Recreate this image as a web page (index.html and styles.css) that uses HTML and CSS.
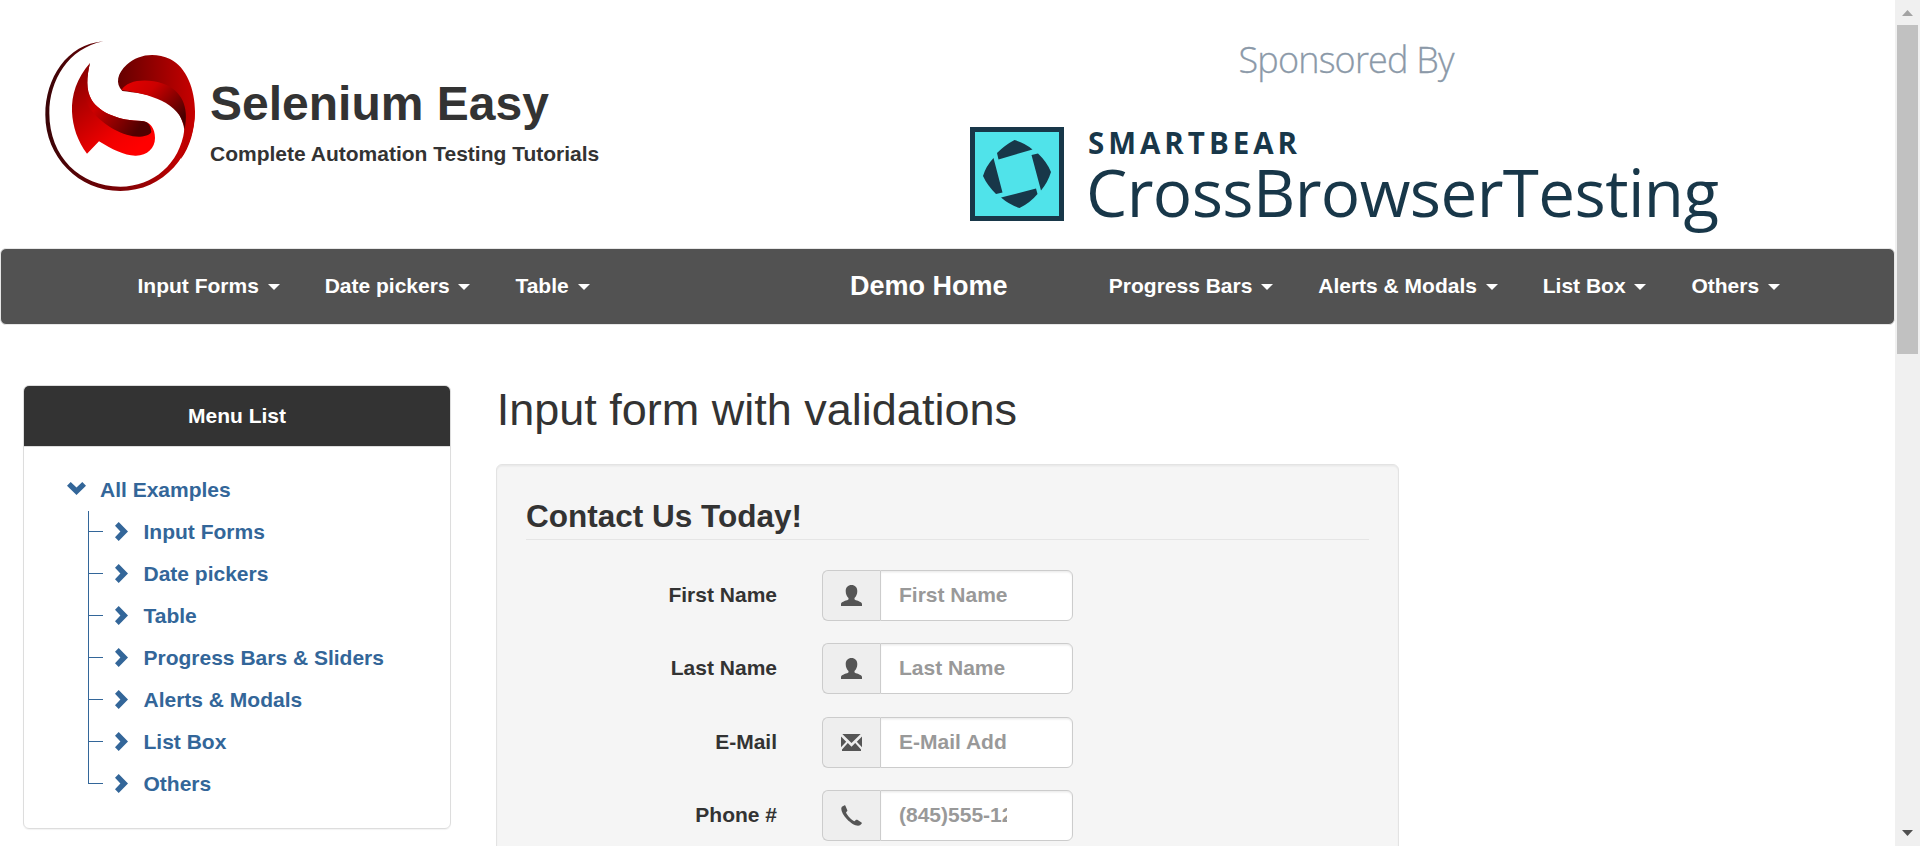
FILE: index.html
```html
<!DOCTYPE html>
<html lang="en">
<head>
<meta charset="utf-8">
<title>Selenium Easy - Input form with validations</title>
<link rel="stylesheet" href="styles.css">
</head>
<body>
<svg class="defs" width="0" height="0" aria-hidden="true">
  <symbol id="user" viewBox="0 0 21 21"><path d="M10.500 0C14 0 16.300 2.400 16.300 6C16.300 9 15.200 11.500 13.500 13V14.300C14 15.500 21 16.500 21 19V21H0V19C0 16.500 7 15.500 7.500 14.300V13C5.800 11.500 4.700 9 4.700 6C4.700 2.400 7 0 10.500 0Z"/></symbol>
  <symbol id="mail" viewBox="0 0 21 17"><path d="M1.300 0H19.700L10.500 9ZM0 2.500L5.200 7.700L0 13.200ZM21 2.500V13.200L15.800 7.700ZM6.800 9L10.500 12.700L14.200 9L20 15.500V17H1V15.500Z"/></symbol>
  <symbol id="phone" viewBox="0 0 21 21"><path d="M3.200 .4L.9 1.800C-1 4 1.500 9.500 6 14.300C10.500 19 15.800 21.800 19 20.300L20.600 18.700C21 18.200 20.900 17.800 20.500 17.500L16.300 14.800C15.700 14.500 15.200 14.600 14.800 15L13.500 16.200C11 15.200 6.300 10.500 5 7.400L6 6.300C6.400 5.900 6.500 5.500 6.200 4.900L4.400 .7C4.100 .2 3.700 .1 3.200 .4Z"/></symbol>
  <symbol id="right" viewBox="0 0 13 19"><path d="M3.700 0L13 9.500L3.700 19L0 15.300L5.400 9.500L0 3.700Z"/></symbol>
  <symbol id="down" viewBox="0 0 19 13"><path d="M0 3.700L3.700 0L9.500 5.400L15.300 0L19 3.700L9.500 13Z"/></symbol>
</svg>
<div class="window">
  <div class="page">
    <header class="header">
      <svg class="logo" viewBox="0 0 540 510" aria-hidden="true">
        <defs>
          <linearGradient id="ring" x1="0" y1="0" x2="1" y2="0"><stop offset="0" stop-color="#3a0407"/><stop offset=".5" stop-color="#7d0205"/><stop offset="1" stop-color="#d00000"/></linearGradient>
          <linearGradient id="top" x1="0" y1=".5" x2="1" y2=".5"><stop offset="0" stop-color="#650000"/><stop offset="1" stop-color="#c80000"/></linearGradient>
          <linearGradient id="fold" x1="0" y1="0" x2="1" y2=".7"><stop offset="0" stop-color="#e60000"/><stop offset=".4" stop-color="#cc0000"/><stop offset="1" stop-color="#480000"/></linearGradient>
          <linearGradient id="low" x1="0" y1=".1" x2=".7" y2="1"><stop offset="0" stop-color="#850000"/><stop offset=".75" stop-color="#f00000"/><stop offset="1" stop-color="#ff0000"/></linearGradient>
          <linearGradient id="inner" x1="0" y1="0" x2="1" y2=".75"><stop offset="0" stop-color="#800000"/><stop offset=".4" stop-color="#cc0000"/><stop offset=".95" stop-color="#500000"/></linearGradient>
        </defs>
        <path fill="url(#ring)" d="M220 34C110 43 46 145 46 255C46 380 145 483 271 483C400 483 495 375 495 240L463 300C450 400 370 470 271 470C150 470 58 380 58 250C58 150 115 55 220 34Z"/>
        <path fill="url(#top)" d="M277 183C255 160 262 130 290 104C325 72 375 66 420 87C470 111 495 180 495 245C494 300 480 350 452 388C464 350 468 300 457 275C435 200 350 192 277 183Z"/>
        <path fill="url(#fold)" d="M275 180C290 150 350 143 400 161C455 181 478 230 464 297C452 215 355 192 275 180Z"/>
        <path fill="url(#low)" d="M180 99C140 145 124 195 126 245C128 290 143 333 171 371L207 334C245 358 285 378 318 377C352 376 375 355 375 324C375 295 360 274 335 273C270 272 210 250 185 210C167 180 170 140 180 99Z"/>
        <path fill="url(#inner)" d="M180 99C157 150 153 205 188 246C222 288 285 322 330 320C350 319 362 312 364 306C362 284 352 273 335 273C270 272 210 250 185 210C167 180 170 140 180 99Z"/>
      </svg>
      <div class="brand">
        <h1 class="brand-name">Selenium Easy</h1>
        <div class="tagline">Complete Automation Testing Tutorials</div>
      </div>
      <svg class="sponsor" viewBox="970 30 760 210">
        <text class="by" x="1238.500" y="72.500" textLength="216">Sponsored By</text>
        <rect x="970" y="127" width="94" height="94" fill="#183749"/>
        <rect x="975" y="132" width="84" height="84" fill="#50e3ea"/>
        <path fill="#183749" d="M997 153Q1005 145 1014.500 140Q1025 143 1032.500 149.500L998.500 159.500ZM1031.500 155L1038 153.500Q1047 162 1051 172Q1048 182 1041 190.500ZM1036 188.500L1037.500 194Q1030 203 1019.500 208Q1009 204.500 1001 197.500ZM993.500 158L1002.500 192.500L996 194Q987 185 983 176Q986 166 993.500 158Z"/>
        <text class="maker" x="1088" y="153.500" textLength="209">SMARTBEAR</text>
        <text class="product" x="1086" y="217" textLength="633">CrossBrowserTesting</text>
      </svg>
    </header>
    <nav class="nav">
      <ul class="nav-group nav-left">
        <li class="nav-item">Input Forms <b class="caret"></b></li>
        <li class="nav-item">Date pickers <b class="caret"></b></li>
        <li class="nav-item">Table <b class="caret"></b></li>
      </ul>
      <a class="home">Demo Home</a>
      <ul class="nav-group nav-right">
        <li class="nav-item">Progress Bars <b class="caret"></b></li>
        <li class="nav-item">Alerts &amp; Modals <b class="caret"></b></li>
        <li class="nav-item">List Box <b class="caret"></b></li>
        <li class="nav-item">Others <b class="caret"></b></li>
      </ul>
    </nav>
    <div class="content">
      <aside class="menu">
        <div class="menu-title">Menu List</div>
        <div class="menu-body">
          <div class="root"><svg class="down"><use href="#down"/></svg>All Examples</div>
          <ul class="tree">
            <li class="node"><svg class="right"><use href="#right"/></svg>Input Forms</li>
            <li class="node"><svg class="right"><use href="#right"/></svg>Date pickers</li>
            <li class="node"><svg class="right"><use href="#right"/></svg>Table</li>
            <li class="node"><svg class="right"><use href="#right"/></svg>Progress Bars &amp; Sliders</li>
            <li class="node"><svg class="right"><use href="#right"/></svg>Alerts &amp; Modals</li>
            <li class="node"><svg class="right"><use href="#right"/></svg>List Box</li>
            <li class="node"><svg class="right"><use href="#right"/></svg>Others</li>
          </ul>
        </div>
      </aside>
      <main class="main">
        <h2 class="title">Input form with validations</h2>
        <form class="well">
          <div class="legend">Contact Us Today!</div>
          <div class="row"><label class="label" for="first">First Name</label><div class="group"><span class="addon"><svg class="icon"><use href="#user"/></svg></span><input class="field" id="first" placeholder="First Name"></div></div>
          <div class="row"><label class="label" for="last">Last Name</label><div class="group"><span class="addon"><svg class="icon"><use href="#user"/></svg></span><input class="field" id="last" placeholder="Last Name"></div></div>
          <div class="row"><label class="label" for="mail-field">E-Mail</label><div class="group"><span class="addon"><svg class="icon mail"><use href="#mail"/></svg></span><input class="field" id="mail-field" placeholder="E-Mail Address"></div></div>
          <div class="row"><label class="label" for="tel">Phone #</label><div class="group"><span class="addon"><svg class="icon"><use href="#phone"/></svg></span><input class="field" id="tel" placeholder="(845)555-1212"></div></div>
        </form>
      </main>
    </div>
  </div>
  <div class="scrollbar">
    <svg class="arrow" viewBox="0 0 11 6"><path d="M0 6L5.500 0L11 6Z" fill="#a3a3a3"/></svg>
    <div class="thumb"></div>
    <svg class="arrow arrow-down" viewBox="0 0 11 6"><path d="M0 0H11L5.500 6Z" fill="#505050"/></svg>
  </div>
</div>
</body>
</html>
```
FILE: styles.css
```css
* { box-sizing: border-box; }
body {
  margin: 0;
  overflow: hidden;
  background: #fff;
  color: #333;
  font: bold 21px/30px "Liberation Sans", Arial, sans-serif;
}
ul { margin: 0; padding: 0; list-style: none; }
h1, h2 { margin: 0; }
.defs { display: block; }
.window { display: flex; height: 846px; }
.page { flex: 1; min-width: 0; overflow: hidden; }

.header { display: flex; height: 248px; padding: 30px 0 0 30px; }
.logo { width: 180px; height: 170px; flex: none; }
.brand { width: 760px; padding: 47px 0 0; }
.brand-name { margin-bottom: 8px; font-size: 48px; line-height: 54px; }
.tagline { line-height: 30px; }
.sponsor { width: 760px; height: 210px; flex: none; font-family: "Open Sans", sans-serif; }
.by { font-size: 36px; font-weight: 300; fill: #8b99a8; stroke: #8b99a8; stroke-width: .3px; }
.maker { font-size: 29.500px; font-weight: 700; fill: #183749; }
.product { font-size: 65.500px; font-weight: 400; fill: #183749; }

.nav {
  display: flex;
  align-items: center;
  height: 77px;
  padding: 0 91.500px 2px 114px;
  border: 1px solid #e7e7e7;
  border-radius: 6px;
  background: #525252;
  color: #fff;
}
.nav-group { display: flex; }
.nav-left { width: 735px; }
.home { flex: 1; font-size: 27px; }
.nav-item { padding: 0 22.500px; white-space: nowrap; }
.caret {
  display: inline-block;
  margin-left: 3px;
  vertical-align: middle;
  border: 6px solid transparent;
  border-top-color: #fff;
  border-bottom: 0;
}

.content { display: flex; align-items: flex-start; padding: 60px 0 0 23px; }
.menu {
  width: 428px;
  height: 444px;
  margin-right: 45px;
  border: 1px solid #ddd;
  border-radius: 6px;
  box-shadow: 0 1px 1px rgba(0, 0, 0, .05);
  overflow: hidden;
}
.menu-title {
  height: 61px;
  padding-top: 15px;
  border-bottom: 1px solid #ddd;
  background: #333;
  color: #fff;
  text-align: center;
}
.menu-body { padding: 28px 0 0 43px; color: #369; }
.root { display: flex; height: 36px; }
.down { width: 19px; height: 13px; margin: 7px 14px 0 0; fill: #369; }
.tree { padding-left: 21px; }
.node { display: flex; height: 42px; line-height: 42px; }
.node::before {
  content: "";
  width: 15px;
  height: 42px;
  margin-right: 11px;
  border-left: 1px solid #369;
  background: linear-gradient(#369, #369) 0 20px / 14px 1px no-repeat;
}
.node:last-child::before { height: 21px; }
.right { width: 13px; height: 19px; margin: 11px 15.500px 0 0; fill: #369; }

.main { width: 903px; }
.title { height: 79px; padding-left: .7px; font-size: 45px; font-weight: 400; line-height: 50px; }
.well {
  height: 500px;
  padding: 28px 29px;
  border: 1px solid #e3e3e3;
  border-radius: 6px;
  background: #f5f5f5;
  box-shadow: inset 0 1.500px 1.500px rgba(0, 0, 0, .05);
}
.legend {
  height: 47px;
  margin-bottom: 30px;
  border-bottom: 1px solid #e5e5e5;
  font-size: 31.500px;
  line-height: 46px;
}
.row { display: flex; margin-bottom: 22.400px; }
.label { width: 251px; margin-right: 45px; padding-top: 10px; text-align: right; }
.group { display: flex; width: 251px; height: 51px; }
.addon {
  display: flex;
  justify-content: center;
  width: 58px;
  padding-top: 14px;
  border: 1px solid #ccc;
  border-right: 0;
  border-radius: 6px 0 0 6px;
  background: #eee;
}
.icon { width: 21px; height: 21px; fill: #555; }
.mail { height: 17px; margin-top: 2px; }
.field {
  width: 193px;
  height: 51px;
  padding: 0 65px 1px 18px;
  border: 1px solid #ccc;
  border-radius: 0 6px 6px 0;
  background: #fff;
  box-shadow: inset 0 1.500px 1.500px rgba(0, 0, 0, .075);
  font: bold 21px/30px "Liberation Sans", Arial, sans-serif;
}
.field::placeholder { color: #999; opacity: 1; }

.scrollbar { display: flex; flex-direction: column; align-items: center; width: 25px; background: #f0f0f0; padding: 10px 0; }
.arrow { width: 11px; height: 6px; flex: none; }
.thumb { width: 21px; height: 329px; margin-top: 9px; background: #c1c1c1; }
.arrow-down { margin-top: auto; }
```
